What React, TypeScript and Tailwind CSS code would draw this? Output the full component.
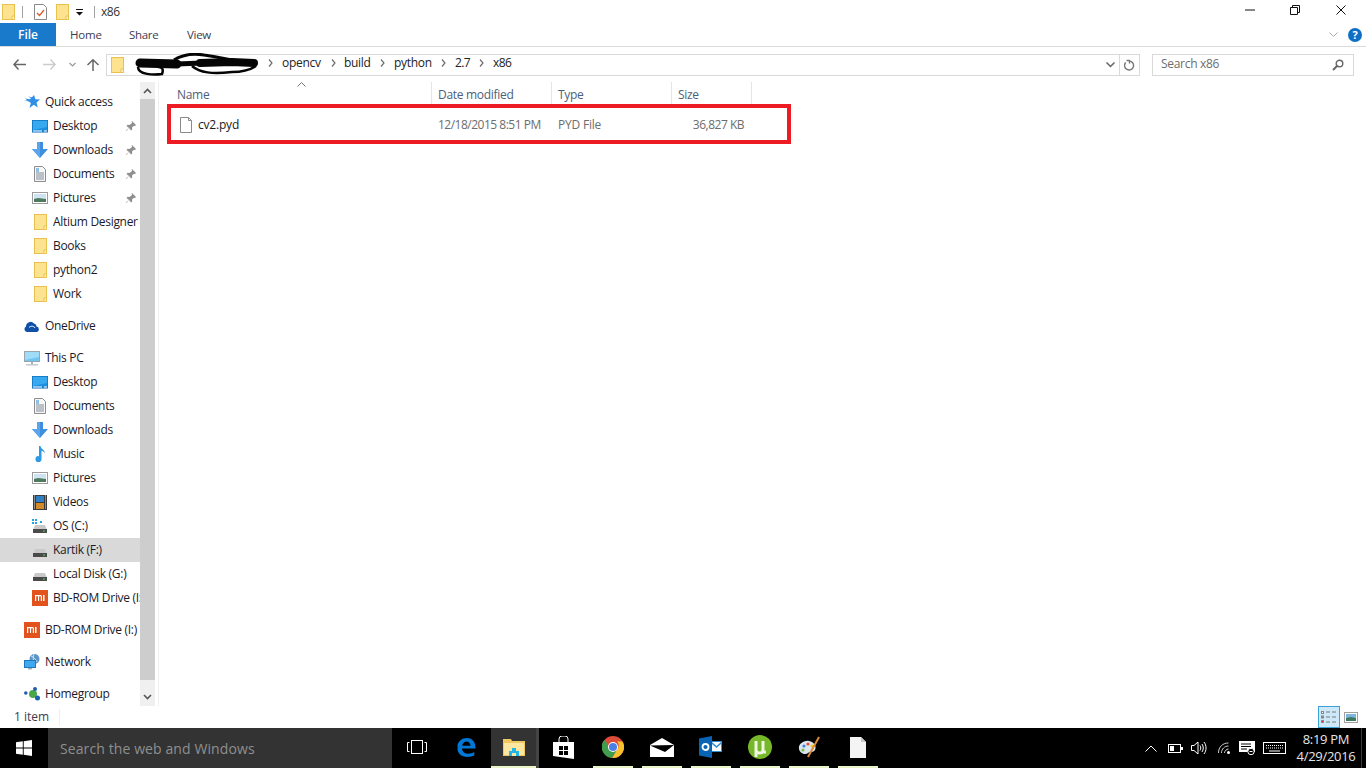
import React from "react";

const font = { fontFamily: '"Open Sans", "Noto Sans", sans-serif' };

function Folder() {
  return (
    <svg width="13" height="16" viewBox="0 0 13 16" className="shrink-0">
      <rect x="0.5" y="0.5" width="12" height="15" fill="#fde38f" stroke="#e9c14f" />
      <path d="M10 15.500V12H12.500V15.500Z" fill="#fff3c8" stroke="#e9c14f" />
    </svg>
  );
}
function DesktopIco() {
  return (
    <svg width="16" height="13" viewBox="0 0 16 13">
      <rect x="0" y="0" width="16" height="12" fill="#1c8ee0" stroke="#0f6cb3" />
      <path d="M1 1h14v6L1 10Z" fill="#36a9ef" />
      <path d="M1 11h9M12 11h3" stroke="#fff" strokeWidth="1" />
    </svg>
  );
}
function DownloadIco() {
  return (
    <svg width="16" height="16" viewBox="0 0 16 16">
      <path d="M5 0h6v7h5l-8 9-8-9h5Z" fill="#3d8fe0" />
      <path d="M5 0h3v16L0 7h5Z" fill="#5ba6ea" />
    </svg>
  );
}
function DocIco() {
  return (
    <svg width="12" height="16" viewBox="0 0 12 16">
      <path d="M.5.500h8l3 3v12H.5Z" fill="#f7f7f7" stroke="#8d8d8d" />
      <path d="M2 3h3M2 5h3" stroke="#2a86d5" />
      <path d="M2 7h8M2 9h8M2 11h8M2 13h8" stroke="#7d8a99" />
    </svg>
  );
}
function PicIco() {
  return (
    <svg width="16" height="12" viewBox="0 0 16 12">
      <rect x=".5" y=".5" width="15" height="11" fill="#fff" stroke="#9b9b9b" />
      <rect x="2" y="2" width="12" height="8" fill="#cfe2f2" />
      <path d="M2 7l4-1 8 1v3H2Z" fill="#4d7a5f" />
    </svg>
  );
}
function Pin() {
  return (
    <svg width="10" height="10" viewBox="0 0 10 10" className="shrink-0">
      <path d="M6 0l4 4-1 1-1-.3L6 6.500l.2 2L5 9.500 3 7 .5 10 0 9.500 3 7 .5 5l1-1.200 2 .2L6 2l-.3-1Z" fill="#8f8f8f" />
    </svg>
  );
}
function Star() {
  return (
    <svg width="16" height="16" viewBox="0 0 16 16">
      <path d="M10 1l1.400 4.200L16 5.500l-3.500 3 1.200 5-3.900-2.700L5.500 14l1.300-5L5 7.500 0 6.500h3.500L1 4.500l5 .7 1-1.200L4 2.500l4 .8Z" fill="#2f8fe6" />
    </svg>
  );
}
function Cloud() {
  return (
    <svg width="16" height="11" viewBox="0 0 16 11">
      <path d="M3 11a3 3 0 0 1-1-5.600A4.500 4.500 0 0 1 10 2.600a3.500 3.500 0 0 1 2.600 3A2.800 2.800 0 0 1 13 11Z" fill="#0f4fa8" />
      <path d="M5 6.500c2-2 5-1.500 6 .5" stroke="#fff" fill="none" />
    </svg>
  );
}
function PcIco() {
  return (
    <svg width="16" height="15" viewBox="0 0 16 15">
      <rect x=".5" y=".5" width="15" height="10" fill="#6fc4f0" stroke="#9aa5ad" />
      <path d="M1 1h14v5L1 9Z" fill="#a0dcf8" />
      <rect x="7" y="11" width="2" height="2" fill="#a8b0b6" />
      <rect x="2" y="13" width="12" height="1.500" fill="#c3c9cd" />
    </svg>
  );
}
function MusicIco() {
  return (
    <svg width="12" height="16" viewBox="0 0 12 16">
      <path d="M5 0h1.500c.3 3 4.500 3.500 4.500 7.500-1-1.700-2.500-2.500-3.500-2.700V13a3 3 0 1 1-2.500-2.800Z" fill="#2b9be8" />
    </svg>
  );
}
function VideoIco() {
  return (
    <svg width="14" height="15" viewBox="0 0 14 15">
      <rect width="14" height="15" fill="#3b3b3b" />
      <rect x="3" y="1" width="8" height="6" fill="#2f7fc4" />
      <rect x="3" y="8" width="8" height="6" fill="#d38b2a" />
      <path d="M1 1h1M1 3h1M1 5h1M1 7h1M1 9h1M1 11h1M1 13h1M12 1h1M12 3h1M12 5h1M12 7h1M12 9h1M12 11h1M12 13h1" stroke="#ddd" />
    </svg>
  );
}
function DriveIco({ win }: { win?: boolean }) {
  return (
    <svg width="16" height="15" viewBox="0 0 16 15">
      {win && <path d="M0 0h2v2H0ZM3 0h2v2H3ZM0 3h2v2H0ZM3 3h2v2H3ZM8 2h2v2H8Z" fill="#21a5e8" />}
      <path d="M3 6h10l2 5H1Z" fill="#c9c9c9" />
      <rect x="1" y="10" width="14" height="4" fill="#4a4a4a" />
      <rect x="11" y="11.500" width="2" height="1" fill="#4ddc59" />
    </svg>
  );
}
function MiIco() {
  return (
    <svg width="16" height="16" viewBox="0 0 16 16">
      <rect width="16" height="16" fill="#e2521d" />
      <path d="M3 5h5.500a1.500 1.500 0 0 1 1.500 1.500V11H8.800V6.200H7.100V11H6V6.200H4.200V11H3ZM11 5h1.500v6H11Z" fill="#fff" />
    </svg>
  );
}
function NetIco() {
  return (
    <svg width="16" height="16" viewBox="0 0 16 16">
      <circle cx="10.500" cy="5" r="5" fill="#5b94c9" />
      <path d="M7 2c3 1 5 4 6 6M10 0c-1 3-1 6 0 9" stroke="#cfe3f3" fill="none" />
      <rect x=".5" y="6.500" width="11" height="7" fill="#3ea9ee" stroke="#1e78bd" />
      <rect x="4" y="14" width="4" height="1.500" fill="#a7b1b8" />
    </svg>
  );
}
function HomeIco() {
  return (
    <svg width="16" height="14" viewBox="0 0 16 14">
      <circle cx="1.800" cy="6" r="1.800" fill="#1f5fb0" />
      <circle cx="9" cy="7" r="4" fill="#4aa84a" />
      <circle cx="11" cy="2" r="2" fill="#1f5fb0" />
      <circle cx="13.500" cy="11" r="2.500" fill="#1f5fb0" />
    </svg>
  );
}

type Row = { label: string; icon: React.ReactNode; indent?: boolean; pin?: boolean; sel?: boolean; gap?: boolean };

const rows: Row[] = [
  { label: "Quick access", icon: <Star /> },
  { label: "Desktop", icon: <DesktopIco />, indent: true, pin: true },
  { label: "Downloads", icon: <DownloadIco />, indent: true, pin: true },
  { label: "Documents", icon: <DocIco />, indent: true, pin: true },
  { label: "Pictures", icon: <PicIco />, indent: true, pin: true },
  { label: "Altium Designer", icon: <Folder />, indent: true },
  { label: "Books", icon: <Folder />, indent: true },
  { label: "python2", icon: <Folder />, indent: true },
  { label: "Work", icon: <Folder />, indent: true },
  { label: "OneDrive", icon: <Cloud />, gap: true },
  { label: "This PC", icon: <PcIco />, gap: true },
  { label: "Desktop", icon: <DesktopIco />, indent: true },
  { label: "Documents", icon: <DocIco />, indent: true },
  { label: "Downloads", icon: <DownloadIco />, indent: true },
  { label: "Music", icon: <MusicIco />, indent: true },
  { label: "Pictures", icon: <PicIco />, indent: true },
  { label: "Videos", icon: <VideoIco />, indent: true },
  { label: "OS (C:)", icon: <DriveIco win />, indent: true },
  { label: "Kartik (F:)", icon: <DriveIco />, indent: true, sel: true },
  { label: "Local Disk (G:)", icon: <DriveIco />, indent: true },
  { label: "BD-ROM Drive (I:)", icon: <MiIco />, indent: true },
  { label: "BD-ROM Drive (I:)", icon: <MiIco />, gap: true },
  { label: "Network", icon: <NetIco />, gap: true },
  { label: "Homegroup", icon: <HomeIco />, gap: true },
];

function NavRow({ r }: { r: Row }) {
  return (
    <div className={`relative flex h-6 shrink-0 items-center overflow-hidden whitespace-nowrap text-[12px] tracking-[-0.3px] text-[#1a1a2a] ${r.sel ? "bg-[#d9d9d9]" : ""} ${r.gap ? "mt-2" : ""}`}>
      <div className={`flex w-4 shrink-0 items-center justify-center ${r.indent ? "ml-8" : "ml-6"}`}>{r.icon}</div>
      <span className="ml-[5px] shrink-0">{r.label}</span>
      {r.pin && (
        <span className="absolute right-[4px] top-[7px]">
          <Pin />
        </span>
      )}
    </div>
  );
}

function Chevron({ up }: { up?: boolean }) {
  return (
    <svg width="9" height="6" viewBox="0 0 9 6">
      <path d={up ? "M1 5l3.500-3.500L8 5" : "M1 1l3.500 3.500L8 1"} stroke="#555" strokeWidth="1.600" fill="none" />
    </svg>
  );
}
function Sep() {
  return (
    <svg width="5" height="8" viewBox="0 0 5 8" className="shrink-0">
      <path d="M1 .5l3 3.500-3 3.500" stroke="#6d6d6d" strokeWidth="1.200" fill="none" />
    </svg>
  );
}

function Cell({ children, on }: { children?: React.ReactNode; on?: boolean }) {
  return (
    <div className="flex h-10 w-[49px] shrink-0 flex-col items-center justify-center">
      <div className="flex flex-1 items-center justify-center">{children}</div>
      <div className={`h-[2px] w-[40px] ${on ? "bg-[#e9f5c4]" : ""}`} />
    </div>
  );
}

export default function App() {
  return (
    <div style={font} className="flex h-[768px] w-[1366px] flex-col overflow-hidden bg-white">
      {/* title bar */}
      <div className="flex h-[23px] shrink-0 items-center">
        <div className="ml-[2px] flex items-center">
          <Folder />
          <div className="ml-[7px] h-[12px] w-px bg-[#a0a0a0]" />
          <svg width="13" height="16" viewBox="0 0 13 16" className="ml-[11px]">
            <path d="M.5.500h9l3 3v12H.5Z" fill="#fff" stroke="#888" />
            <path d="M3 9l2.500 2.500L10 6" stroke="#e2572b" strokeWidth="1.300" fill="none" />
          </svg>
          <div className="ml-[9px]">
            <Folder />
          </div>
          <svg width="8" height="7" viewBox="0 0 8 7" className="ml-[7px] mt-[2px]">
            <path d="M0 0h7v1H0ZM0 3h7L3.500 6.500Z" fill="#111" />
          </svg>
          <div className="ml-[10px] h-[12px] w-px bg-[#a0a0a0]" />
          <span className="ml-[6px] text-[12px] tracking-[-0.5px] text-[#333]">x86</span>
        </div>
        <div className="mb-[3px] ml-auto flex items-center">
          <svg width="10" height="2" viewBox="0 0 10 2" className="mr-[35px]">
            <path d="M0 1h10" stroke="#111" />
          </svg>
          <svg width="10" height="10" viewBox="0 0 10 10" className="mr-[36px]">
            <path d="M.5 2.500h7v7h-7ZM2.500 2.500V.5h7v7h-2" stroke="#111" fill="none" />
          </svg>
          <svg width="10" height="10" viewBox="0 0 10 10" className="mr-[20px]">
            <path d="M.5.500l9 9M9.500.5l-9 9" stroke="#111" />
          </svg>
        </div>
      </div>
      {/* ribbon tabs */}
      <div className="flex h-6 shrink-0 items-center border-b border-[#dadada] text-[12px]">
        <div className="flex h-[23px] w-[56px] items-center justify-center bg-[#1979ca] font-semibold text-white">File</div>
        <div className="ml-[14px] mt-[1px] w-[30px] text-[11.5px] tracking-[-0.2px] text-[#3c3c50]">Home</div>
        <div className="ml-[29px] mt-[1px] w-[29px] text-[11.5px] tracking-[-0.3px] text-[#3c3c50]">Share</div>
        <div className="ml-[29px] mt-[1px] w-[25px] text-[11.5px] tracking-[-0.3px] text-[#3c3c50]">View</div>
        <div className="ml-auto flex items-center">
          <svg width="9" height="6" viewBox="0 0 9 6" className="mr-[10px]">
            <path d="M.5.500l4 4 4-4" stroke="#a8a8a8" fill="none" />
          </svg>
          <div className="mr-[4px] flex h-[14px] w-[14px] items-center justify-center rounded-full bg-[#0f6fc6] text-[11px] font-bold leading-none text-white">?</div>
        </div>
      </div>
      {/* address row */}
      <div className="flex h-[35px] shrink-0 items-center">
        <svg width="13" height="11" viewBox="0 0 13 11" className="ml-[13px] shrink-0">
          <path d="M5.500.5L1 5.500l4.500 5M1 5.500h12" stroke="#666" strokeWidth="1.500" fill="none" />
        </svg>
        <svg width="13" height="11" viewBox="0 0 13 11" className="ml-[17px] shrink-0">
          <path d="M7.500.5L12 5.500l-4.500 5M12 5.500H0" stroke="#ccc" strokeWidth="1.500" fill="none" />
        </svg>
        <svg width="7" height="5" viewBox="0 0 7 5" className="ml-[13px] shrink-0">
          <path d="M.5 1l3 3 3-3" stroke="#999" strokeWidth="1.200" fill="none" />
        </svg>
        <svg width="12" height="12" viewBox="0 0 12 12" className="ml-[11px] shrink-0">
          <path d="M.5 6L6 .8 11.500 6M6 1v11" stroke="#666" strokeWidth="1.500" fill="none" />
        </svg>
        <div className="relative ml-[7px] flex h-[22px] w-[1034px] shrink-0 items-center border border-[#d9d9d9]">
          <div className="ml-[4px]">
            <Folder />
          </div>
          <div className="mb-[3px] ml-[144px] flex items-center whitespace-nowrap text-[12px] tracking-[-0.3px] text-[#222]">
            <Sep />
            <span className="ml-[9px] w-[40px]">opencv</span>
            <span className="ml-[9px]"><Sep /></span>
            <span className="ml-[8px] w-[27px]">build</span>
            <span className="ml-[9px]"><Sep /></span>
            <span className="ml-[9px] w-[38px]">python</span>
            <span className="ml-[9px]"><Sep /></span>
            <span className="ml-[9px] w-[15px] tracking-[-0.6px]">2.7</span>
            <span className="ml-[9px]"><Sep /></span>
            <span className="ml-[9px] tracking-[-0.6px]">x86</span>
          </div>
          <svg width="128" height="26" viewBox="0 0 128 26" className="absolute left-[25px] top-[-2px]">
            <path d="M8 10L45 11" stroke="#050505" strokeWidth="9" strokeLinecap="round" fill="none" />
            <path d="M45 11L70 10" stroke="#050505" strokeWidth="5" fill="none" />
            <path d="M68 10L100 9 122 10" stroke="#050505" strokeWidth="8" strokeLinecap="round" fill="none" />
            <path d="M42 7C50 2 60 0 72 2 80 3 90 5 100 7" stroke="#050505" strokeWidth="3" fill="none" />
            <path d="M6 14C6 22 22 22 30 21 32 16 30 14 26 14" stroke="#050505" strokeWidth="2.500" fill="none" />
            <path d="M60 13C68 20 80 21 100 19 110 19 118 17 124 13" stroke="#050505" strokeWidth="2.500" fill="none" />
          </svg>
          <div className="ml-auto flex h-full items-center">
            <svg width="9" height="6" viewBox="0 0 9 6" className="mr-[4px]">
              <path d="M.5.500l4 4 4-4" stroke="#666" strokeWidth="1.500" fill="none" />
            </svg>
            <div className="flex h-full w-[20px] items-center justify-center border-l border-[#d9d9d9]">
              <svg width="11" height="12" viewBox="0 0 11 12">
                <path d="M2.500 1.500h3v3M5 2a4.500 4.500 0 1 1-3.300 1.500" stroke="#777" strokeWidth="1.400" fill="none" />
              </svg>
            </div>
          </div>
        </div>
        <div className="ml-[12px] flex h-[22px] w-[202px] shrink-0 items-center border border-[#d9d9d9] text-[12px] tracking-[-0.3px] text-[#6d6d6d]">
          <span className="mb-[2px] ml-[8px]">Search x86</span>
          <svg width="12" height="12" viewBox="0 0 12 12" className="ml-auto mr-[9px]">
            <circle cx="7.500" cy="4.500" r="3.300" stroke="#666" strokeWidth="1.400" fill="none" />
            <path d="M5 7l-4 4" stroke="#666" strokeWidth="2" />
          </svg>
        </div>
      </div>
      {/* body */}
      <div className="flex h-[624px] shrink-0">
        <div className="flex h-full w-[140px] shrink-0 flex-col overflow-hidden pt-2">
          {rows.map((r, i) => (
            <NavRow key={i} r={r} />
          ))}
        </div>
        <div className="flex h-full w-[15px] shrink-0 flex-col bg-[#f0f0f0]">
          <div className="flex h-[17px] items-center justify-center">
            <Chevron up />
          </div>
          <div className="h-[581px] bg-[#cdcdcd]" />
          <div className="flex flex-1 items-center justify-center pt-[8px]">
            <Chevron />
          </div>
        </div>
        <div className="ml-[3px] h-full w-px shrink-0 bg-[#f0f0f0]" />
        <div className="flex min-w-0 flex-1 flex-col">
          {/* header */}
          <div className="relative flex h-[22px] shrink-0 text-[12px] tracking-[-0.3px] text-[#4c607a]">
            <div className="flex h-full w-[273px] shrink-0 items-end border-r border-[#e5e5e5] pl-[18px]">Name</div>
            <div className="flex h-full w-[120px] shrink-0 items-end border-r border-[#e5e5e5] pl-[6px]">Date modified</div>
            <div className="flex h-full w-[120px] shrink-0 items-end border-r border-[#e5e5e5] pl-[6px]">Type</div>
            <div className="flex h-full w-[80px] shrink-0 items-end border-r border-[#e5e5e5] pl-[6px]">Size</div>
            <svg width="9" height="5" viewBox="0 0 9 5" className="absolute left-[138px] top-[0px]">
              <path d="M.5 4.500l4-4 4 4" stroke="#777" fill="none" />
            </svg>
          </div>
          {/* row with annotation */}
          <div className="ml-[8px] flex h-[40px] w-[624px] shrink-0 items-center border-4 border-[#ed1c24] pt-[1px] text-[12px] tracking-[-0.2px] text-[#6d6d6d]">
            <svg width="12" height="16" viewBox="0 0 12 16" className="ml-[9px] shrink-0">
              <path d="M.5.500h8l3 3v12H.5Z" fill="#fff" stroke="#8a8a8a" />
              <path d="M8.500.5v3h3" stroke="#8a8a8a" fill="none" />
            </svg>
            <span className="ml-[6px] w-[240px] shrink-0 text-[#1a1a1a]">cv2.pyd</span>
            <span className="w-[120px] shrink-0 whitespace-nowrap tracking-[-0.5px]">12/18/2015 8:51 PM</span>
            <span className="w-[100px] shrink-0">PYD File</span>
            <span className="w-[86px] shrink-0 text-right tracking-[-0.5px]">36,827 KB</span>
          </div>
        </div>
      </div>
      {/* status bar */}
      <div className="flex h-[22px] shrink-0 items-center text-[12px] text-[#3c3c50]">
        <span className="ml-[14px]">1 item</span>
        <div className="ml-[10px] h-4 w-px bg-[#efefef]" />
        <div className="ml-auto flex items-center">
          <div className="flex h-[22px] w-[22px] items-center justify-center border border-[#3ea0d8] bg-[#cde8f8]">
            <svg width="16" height="13" viewBox="0 0 16 13">
              <path d="M5 1h4M11 1h4M5 6h4M11 6h4M5 11h4M11 11h4" stroke="#7a7a7a" strokeWidth="1.200" />
              <rect x=".5" y=".5" width="2" height="2" fill="#fff" stroke="#888" />
              <rect x=".5" y="5" width="2" height="2" fill="#fff" stroke="#888" />
              <rect x=".5" y="9.500" width="2" height="2" fill="#e24" stroke="#888" />
            </svg>
          </div>
          <div className="ml-[4px] mr-[8px]">
            <svg width="14" height="11" viewBox="0 0 14 11">
              <rect x=".5" y=".5" width="13" height="10" fill="#fff" stroke="#a0a0a0" />
              <rect x="2" y="2" width="10" height="7" fill="#7fb6df" />
              <path d="M2 6l5-1 5 1v3H2Z" fill="#3d7a5e" />
            </svg>
          </div>
        </div>
      </div>
      {/* taskbar */}
      <div className="flex h-10 shrink-0 items-center bg-black">
        <div className="flex h-full w-12 shrink-0 items-center justify-center">
          <svg width="16" height="16" viewBox="0 0 16 16">
            <path d="M0 2.300L6.800 1.300V7.600H0ZM7.700 1.200L16 0V7.600H7.700ZM0 8.400H6.800V14.700L0 13.700ZM7.700 8.400H16V16L7.700 14.800Z" fill="#fff" />
          </svg>
        </div>
        <div className="flex h-full w-[344px] shrink-0 items-center bg-[#333333] pl-[12px] text-[14px] tracking-[0.1px] text-[#8f8f8f]">Search the web and Windows</div>
        <Cell>
          <svg width="20" height="14" viewBox="0 0 20 14">
            <rect x="4.500" y=".5" width="11" height="13" stroke="#fff" fill="none" />
            <path d="M2.500 2.500H.5v9h2M17.500 2.500h2v9h-2" stroke="#fff" fill="none" />
          </svg>
        </Cell>
        <Cell>
          <svg width="20" height="19" viewBox="0 0 20 19">
            <path d="M1 9C2 3 6 0 11 0c5 0 8.500 3.500 8.500 10.500H6c.3 3.500 3 5.200 6 5.200 2.500 0 4.500-.6 6.300-1.700v3.600C16.500 18.500 14 19 11.500 19 5 19 1.500 15 1.500 10.500c0-3 1.500-5.500 4-7-1.800 1.500-3.300 3.500-4.500 5.500ZM6.200 7.800h8.300C14.300 5.300 12.800 3.500 10.500 3.500S6.700 5.300 6.200 7.800Z" fill="#0078d7" />
          </svg>
        </Cell>
        <div className="ml-[1px] flex h-10 w-[48px] shrink-0 flex-col items-center border-r-[3px] border-r-[#444444] bg-[#333333]">
          <div className="flex flex-1 items-center justify-center">
            <svg width="22" height="18" viewBox="0 0 22 18">
              <path d="M0 1h8l1 2h13v15H0Z" fill="#f0c860" />
              <path d="M1 5h20v12H1Z" fill="#fde6a0" />
              <path d="M6 18v-5h3v-3h4v3h3v5Z" fill="#22b5e8" />
              <path d="M9 18v-3h4v3Z" fill="#fde6a0" />
            </svg>
          </div>
          <div className="h-[2px] w-full bg-[#e9f5c4]" />
        </div>
        <Cell>
          <svg width="21" height="23" viewBox="0 0 21 23">
            <path d="M0 6h21v17L0 20Z" fill="#fff" />
            <path d="M6 6V3a3 3 0 0 1 3-3h3a3 3 0 0 1 3 3v3" stroke="#fff" fill="none" />
            <path d="M6 10h4v4H6ZM11 10h4v4h-4ZM6 15h4v4H6ZM11 15h4v4h-4Z" fill="#000" />
          </svg>
        </Cell>
        <Cell on>
          <svg width="22" height="22" viewBox="0 0 22 22">
            <circle cx="11" cy="11" r="11" fill="#dd4b39" />
            <path d="M20.500 5.500A11 11 0 0 1 10 22l5-8.500a5.500 5.500 0 0 0 0-8Z" fill="#fbc02d" />
            <path d="M2.300 4A11 11 0 0 0 10 22l5-8.500a5.500 5.500 0 0 1-9-5Z" fill="#3f9e4d" />
            <circle cx="11" cy="11" r="5" fill="#fff" />
            <circle cx="11" cy="11" r="4" fill="#4a7fe8" />
          </svg>
        </Cell>
        <Cell on>
          <svg width="24" height="19" viewBox="0 0 24 19">
            <path d="M0 7L12 0l12 7v12H0Z" fill="#fff" />
            <path d="M0 7.500L24 7 15 14Z" fill="#000" />
          </svg>
        </Cell>
        <Cell on>
          <svg width="23" height="22" viewBox="0 0 23 22">
            <rect x="10" y="5" width="13" height="11" fill="#2e8ed6" />
            <path d="M13 6l4.500 4 4.500-4Z" fill="#fff" />
            <path d="M13 8l4.500 4L22 8v7h-9Z" fill="#fff" />
            <path d="M0 2.500L13 0v22L0 19.500Z" fill="#0a64b5" />
            <circle cx="6.500" cy="11" r="3" stroke="#fff" strokeWidth="1.800" fill="none" />
          </svg>
        </Cell>
        <Cell on>
          <svg width="24" height="24" viewBox="0 0 24 24">
            <circle cx="12" cy="12" r="12" fill="#76b82a" />
            <path d="M8 6L8 15Q8 18 12 18 15 18 15 15M15 6L15 15Q15 17.500 18 17M8 15L8 22" stroke="#eef7e2" strokeWidth="3" fill="none" />
          </svg>
        </Cell>
        <Cell on>
          <svg width="24" height="24" viewBox="0 0 24 24">
            <path d="M2 14C1 9 7 5 12 6c5 1 8 5 6 9-2 3-5 1-7 3-2 2-8 1-9-4Z" fill="#dce6f0" />
            <circle cx="7" cy="11" r="1.600" fill="#3a86d8" />
            <circle cx="11" cy="9" r="1.600" fill="#e24b3c" />
            <circle cx="6" cy="15" r="1.600" fill="#7ac143" />
            <circle cx="15" cy="11" r="1.600" fill="#f5c518" />
            <path d="M11 22L22 2" stroke="#d78a3c" strokeWidth="2" />
          </svg>
        </Cell>
        <Cell on>
          <svg width="16" height="21" viewBox="0 0 16 21">
            <path d="M0 0h11l5 5v16H0Z" fill="#f4f4f4" />
            <path d="M11 0v5h5Z" fill="#c8c8c8" />
          </svg>
        </Cell>
        {/* tray */}
        <div className="ml-auto flex h-full items-center text-white">
          <svg width="12" height="7" viewBox="0 0 12 7">
            <path d="M.5 6.500L6 1l5.500 5.500" stroke="#fff" fill="none" />
          </svg>
          <svg width="15" height="9" viewBox="0 0 15 9" className="ml-[11px]">
            <rect x=".5" y=".5" width="12" height="8" stroke="#fff" fill="none" />
            <rect x="2" y="2" width="4" height="5" fill="#fff" />
            <rect x="13" y="3" width="2" height="3" fill="#fff" />
          </svg>
          <svg width="16" height="14" viewBox="0 0 16 14" className="ml-[8px]">
            <path d="M.5 4.500h2.500L7 1v12L3 9.500H.5Z" stroke="#fff" fill="none" />
            <path d="M9 4.500c1 1.500 1 3.500 0 5M11 3c1.700 2.500 1.700 5.500 0 8M13 1c2.700 3.500 2.700 8.500 0 12" stroke="#fff" fill="none" />
          </svg>
          <svg width="13" height="12" viewBox="0 0 13 12" className="ml-[11px]">
            <path d="M.5 11c0-6 4-10 10-10M3.500 11c0-4 3-7 7-7M6.500 11c0-2 2-4 4-4" stroke="#cfcfcf" fill="none" />
            <circle cx="10.500" cy="10.500" r="1.500" fill="#fff" />
          </svg>
          <svg width="16" height="14" viewBox="0 0 16 14" className="ml-[8px]">
            <path d="M0 0h16v11h-4a4 4 0 0 0-4 0H0Z" fill="#fff" />
            <path d="M2 3h10M2 5.500h10M2 8h6" stroke="#000" />
            <circle cx="12" cy="10.500" r="3.200" fill="#000" stroke="#fff" />
            <path d="M10.500 10.500h3" stroke="#fff" />
          </svg>
          <svg width="23" height="12" viewBox="0 0 23 12" className="ml-[8px]">
            <rect x=".5" y=".5" width="22" height="11" stroke="#fff" fill="none" />
            <path d="M3 3.500h17M3 6h17" stroke="#fff" strokeDasharray="1 1" />
            <path d="M6 9h11" stroke="#fff" />
          </svg>
          <div className="ml-[5px] flex w-[70px] flex-col items-center text-[13px] leading-[17px] tracking-[-0.3px] text-[#e6e6e6]">
            <span>8:19 PM</span>
            <span>4/29/2016</span>
          </div>
          <div className="mr-[4px] h-full w-px bg-[#3a3a3a]" />
        </div>
      </div>
    </div>
  );
}
